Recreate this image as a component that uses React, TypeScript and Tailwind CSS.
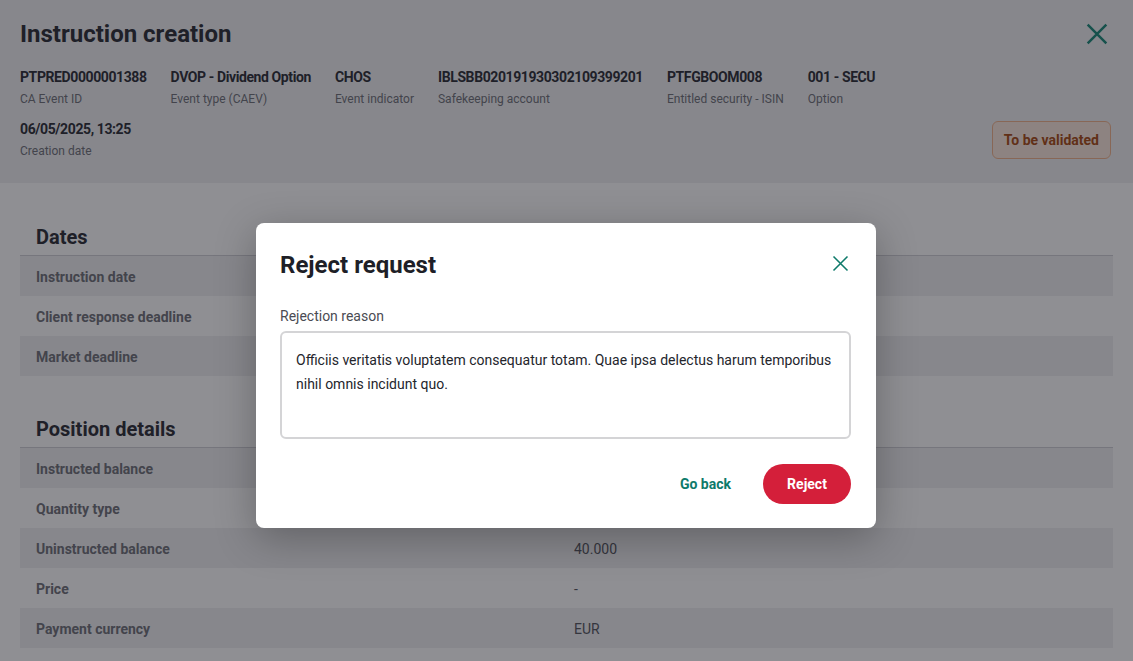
import React from "react";

const info: [string, string][] = [
  ["PTPRED0000001388", "CA Event ID"],
  ["DVOP - Dividend Option", "Event type (CAEV)"],
  ["CHOS", "Event indicator"],
  ["IBLSBB020191930302109399201", "Safekeeping account"],
  ["PTFGBOOM008", "Entitled security - ISIN"],
  ["001 - SECU", "Option"],
];

const dates: [string, string][] = [
  ["Instruction date", ""],
  ["Client response deadline", ""],
  ["Market deadline", ""],
];

const positions: [string, string][] = [
  ["Instructed balance", ""],
  ["Quantity type", ""],
  ["Uninstructed balance", "40.000"],
  ["Price", "-"],
  ["Payment currency", "EUR"],
];

function XIcon({ className, stroke }: { className: string; stroke: number }) {
  return (
    <svg viewBox="0 0 24 24" className={className} fill="none" stroke="currentColor" strokeWidth={stroke} strokeLinecap="butt">
      <path d="M4 4L20 20M20 4L4 20" />
    </svg>
  );
}

function Item({ value, label }: { value: string; label: string }) {
  return (
    <div className="flex flex-col gap-1">
      <div className="text-[14px] leading-5 font-bold tracking-[-0.4px] text-[#2b2c35]">{value}</div>
      <div className="text-[12px] leading-4 text-[#6f7078]">{label}</div>
    </div>
  );
}

function Section({ title, rows, className }: { title: string; rows: [string, string][]; className?: string }) {
  return (
    <div className={className}>
      <div className="pl-4 pb-1 text-[20px] leading-7 font-bold text-[#2b2c35] border-b border-[#cfd0d5]">{title}</div>
      {rows.map(([l, v], i) => (
        <div key={l} className={`grid grid-cols-[538px_1fr] items-center h-10 pl-4 pt-[2px] ${i % 2 === 0 ? "bg-[#f0f0f2]" : ""}`}>
          <div className="text-[14px] font-bold text-[#6f7078]">{l}</div>
          <div className="text-[14px] text-[#55565e]">{v}</div>
        </div>
      ))}
    </div>
  );
}

export default function App() {
  return (
    <div className="relative w-[1133px] h-[661px] overflow-hidden bg-white" style={{ fontFamily: "Roboto, 'Noto Sans', sans-serif" }}>
      <div className="bg-[#eff0f2] pl-5 pr-[22px] pt-[18px] pb-6">
        <div className="flex items-center justify-between">
          <h1 className="text-[24px] leading-8 font-bold text-[#2b2c35]">Instruction creation</h1>
          <XIcon className="w-7 h-7 text-[#1a8a78]" stroke={2.1} />
        </div>
        <div className="flex gap-6 mt-[17px]">
          {info.map(([v, l]) => (
            <Item key={v} value={v} label={l} />
          ))}
        </div>
        <div className="flex justify-between items-end mt-3">
          <Item value="06/05/2025, 13:25" label="Creation date" />
          <div className="h-[38px] px-[11px] flex items-center rounded-md border border-[#f2b48c] bg-[#fbe9dd] text-[14px] font-bold text-[#a84b14]">
            To be validated
          </div>
        </div>
      </div>

      <div className="px-5 pt-10">
        <Section title="Dates" rows={dates} />
        <Section title="Position details" rows={positions} className="mt-[39px]" />
      </div>

      <div className="absolute inset-0 bg-[rgba(20,20,28,0.475)]" />

      <div className="absolute left-[256px] top-[223px] w-[620px] bg-white rounded-lg p-6 shadow-[0_10px_40px_rgba(0,0,0,0.28)]">
        <div className="flex items-center justify-between">
          <h2 className="text-[24px] leading-9 font-bold text-[#1e1f27]">Reject request</h2>
          <XIcon className="w-[21px] h-[21px] mr-[1px] -mt-1 text-[#0e7a6a]" stroke={1.8} />
        </div>
        <div className="mt-[23px] text-[14px] leading-5 text-[#4a4b53]">Rejection reason</div>
        <div className="mt-[5px] h-[108px] w-[571px] border-2 border-[#d4d4d6] rounded-md px-[14px] py-[15px] text-[14px] leading-6 text-[#24252c]">
          Officiis veritatis voluptatem consequatur totam. Quae ipsa delectus harum temporibus nihil omnis incidunt quo.
        </div>
        <div className="flex justify-end items-center gap-4 mt-[25px] pr-[1px]">
          <button className="h-10 px-4 text-[14px] font-bold text-[#0e7a6a]">Go back</button>
          <button className="h-10 w-[88px] rounded-full bg-[#d41f3a] text-[14px] font-bold text-white">Reject</button>
        </div>
      </div>
    </div>
  );
}
